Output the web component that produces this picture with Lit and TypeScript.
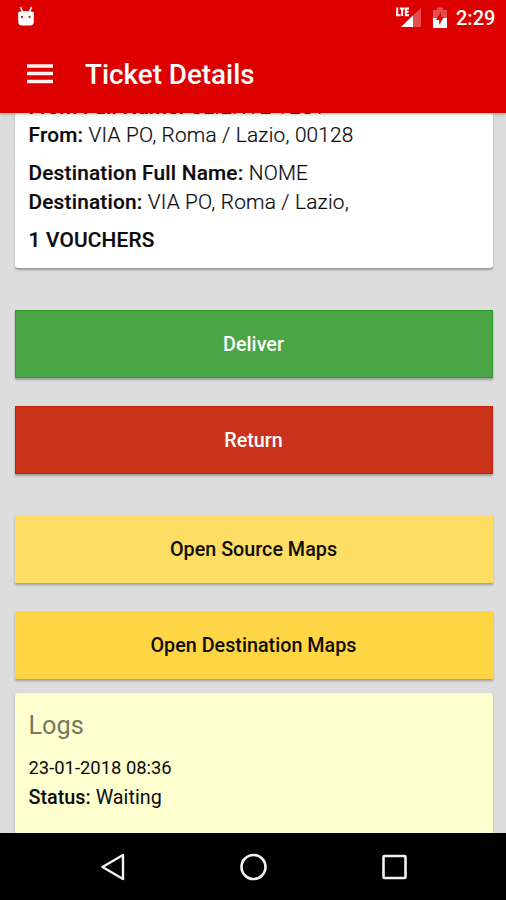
import { LitElement, html, css } from "lit";
import { customElement } from "lit/decorators.js";

@customElement("app-root")
export class AppRoot extends LitElement {
  static styles = css`
    :host {
      display: flex;
      flex-direction: column;
      width: 506px;
      height: 900px;
      overflow: hidden;
      background: #ddd;
      color: #0b0b0b;
      font-family: Roboto, "Liberation Sans", sans-serif;
      font-size: 20px;
    }
    svg { display: block; }
    header {
      flex: none;
      height: 112.5px;
      background: #dc0000;
      color: #fff;
      z-index: 1;
      box-shadow: 0 1px 4px rgba(0, 0, 0, 0.25);
    }
    .status {
      display: flex;
      height: 36px;
      align-items: center;
      padding: 0 11px 0 16px;
    }
    .space { flex: 1; }
    .clock {
      width: 39px;
      margin-left: 8px;
      font-weight: 500;
      font-size: 20px;
      white-space: nowrap;
    }
    .battery { margin-left: 10px; }
    .toolbar {
      display: flex;
      align-items: center;
      height: 76px;
      padding-left: 27px;
    }
    h1 {
      margin: 2px 0 0 32px;
      font-size: 27.8px;
      font-weight: 500;
      line-height: 36px;
    }
    main {
      flex: 1;
      min-height: 0;
      overflow: hidden;
      display: flex;
      flex-direction: column;
      padding: 0 13.5px 0 14.5px;
    }
    .card {
      flex: none;
      box-sizing: border-box;
      background: #fff;
      border-radius: 3px;
      padding: 0 14px;
      box-shadow: 0 1.5px 2px rgba(0, 0, 0, 0.3);
    }
    .ticket {
      height: 174.5px;
      margin-top: -19.5px;
      margin-bottom: 42.5px;
      font-size: 20.8px;
      letter-spacing: 0.2px;
      -webkit-text-stroke: 0.2px currentColor;
    }
    p { margin: 0; line-height: 28.6px; font-weight: 300; white-space: nowrap; }
    p:first-child { line-height: 28px; }
    p + p.group { margin-top: 9.6px; }
    b { font-weight: 500; }
    .btn {
      flex: none;
      height: 67.5px;
      margin: 0 0 28.5px;
      padding: 1.5px 0 0;
      border: 0;
      font: 500 19.75px Roboto, "Liberation Sans", sans-serif;
      color: #fff;
      box-shadow: 0 2px 2px rgba(0, 0, 0, 0.28);
    }
    .deliver { background: #49a546; box-shadow: inset 0 0 0 1px #2c9c29, 0 2px 2px rgba(0, 0, 0, 0.28); }
    .return { background: #cb321a; margin-bottom: 41.5px; box-shadow: inset 0 0 0 1px #c2200c, 0 2px 2px rgba(0, 0, 0, 0.28); }
    .source { background: #fddd63; color: #110d00; }
    .destination { background: #fed645; color: #110d00; margin-bottom: 14px; }
    .logs { height: 160px; background: #fefecf; padding-top: 18px; }
    h2 { margin: 0 0 13.5px; font-size: 25.3px; line-height: 30px; font-weight: 400; color: #777762; }
    .date { font-weight: 400; font-size: 18.4px; }
    .logs .state { font-weight: 400; font-size: 19.8px; line-height: 30px; }
    nav {
      flex: none;
      height: 67px;
      background: #000;
      display: flex;
      justify-content: center;
      align-items: center;
      gap: 112.5px;
    }
  `;

  render() {
    return html`
      <header>
        <div class="status">
          <svg width="20" height="24" viewBox="0 0 20 24">
            <path d="M4.5 1l2 5M15.5 1l-2 5" stroke="#fff" stroke-width="1.6" />
            <path d="M2.2 6Q10 4 17.8 6V16Q17.5 19.5 14 19.5H6Q2.5 19.5 2.2 16Z" fill="#fff" />
            <circle cx="6" cy="11" r="1.1" fill="#a80020" />
            <circle cx="13.5" cy="11" r="1.1" fill="#a80020" />
          </svg>
          <span class="space"></span>
          <svg width="28" height="24" viewBox="0 0 28 24">
            <path d="M27 2V21H7Z" fill="#fff" opacity=".3" />
            <path d="M19 9.5V21H7Z" fill="#fff" />
            <path d="M3.2 1.5V9.2H6.5M5.8 2.4H10.5M8.2 2.4V10M15 2.4H11.9V9.2H15M11.9 5.8H14.6" fill="none" stroke="#fff" stroke-width="2" />
          </svg>
          <svg class="battery" width="16" height="24" viewBox="0 0 16 24">
            <path d="M1 4H5V1.5H11V4H15V12H1Z" fill="#fff" opacity=".3" />
            <path d="M1 12H15V22H1Z" fill="#fff" />
            <path d="M9 6L4 14H7.2V19L12 11H9Z" fill="#dc0000" />
          </svg>
          <span class="clock">2:29</span>
        </div>
        <div class="toolbar">
          <svg width="26" height="20" viewBox="0 0 26 20">
            <path d="M0 2H26M0 9.5H26M0 17.5H26" stroke="#fff" stroke-width="3.4" opacity=".94" />
          </svg>
          <h1>Ticket Details</h1>
        </div>
      </header>
      <main>
        <section class="card ticket">
          <p><b>From Full Name:</b> CLIENTE TEST</p>
          <p><b>From:</b> VIA PO, Roma / Lazio, 00128</p>
          <p class="group"><b>Destination Full Name:</b> NOME</p>
          <p><b>Destination:</b> VIA PO, Roma / Lazio,</p>
          <p class="group"><b>1 VOUCHERS</b></p>
        </section>
        <button class="btn deliver">Deliver</button>
        <button class="btn return">Return</button>
        <button class="btn source">Open Source Maps</button>
        <button class="btn destination">Open Destination Maps</button>
        <section class="card logs">
          <h2>Logs</h2>
          <p class="date">23-01-2018 08:36</p>
          <p class="state"><b>Status:</b> Waiting</p>
        </section>
      </main>
      <nav>
        <svg width="28" height="28" viewBox="0 0 28 28">
          <path d="M24 2V26L3.5 14Z" fill="none" stroke="#f2f2f2" stroke-width="2.4" stroke-linejoin="round" />
        </svg>
        <svg width="28" height="28" viewBox="0 0 28 28">
          <circle cx="14.5" cy="14" r="12" fill="none" stroke="#f2f2f2" stroke-width="2.6" />
        </svg>
        <svg width="28" height="28" viewBox="0 0 28 28">
          <rect x="3.5" y="3" width="22" height="22" rx="1" fill="none" stroke="#f2f2f2" stroke-width="2.6" />
        </svg>
      </nav>
    `;
  }
}
